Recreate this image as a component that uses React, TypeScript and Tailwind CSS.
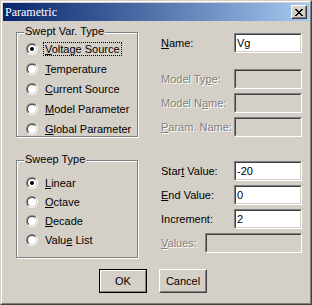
import React from "react";

function Radio({ checked, children, focus, h }: { checked?: boolean; children: React.ReactNode; focus?: boolean; h: string }) {
  return (
    <div className={`flex items-center ${h}`}>
      <div className="w-[12px] h-[12px] shrink-0 rounded-full border border-t-[#808080] border-l-[#808080] border-r-white border-b-white">
        <div className="w-full h-full rounded-full border border-t-[#404040] border-l-[#404040] border-r-[#d4d0c8] border-b-[#d4d0c8] bg-white flex items-center justify-center">
          {checked ? <div className="w-[4px] h-[4px] rounded-full bg-black" /> : null}
        </div>
      </div>
      <span
        className={
          focus
            ? "ml-[5px] px-[1px] leading-[12px] border border-dotted border-black whitespace-nowrap"
            : "ml-[5px] px-[1px] leading-[12px] border border-transparent whitespace-nowrap"
        }
      >
        {children}
      </span>
    </div>
  );
}

function Group({ title, className, children }: { title: string; className: string; children: React.ReactNode }) {
  return (
    <div className={`relative border border-[#808080] shadow-[inset_1px_1px_0_#ffffff,1px_1px_0_#ffffff] ${className}`}>
      <span className="absolute top-[-8px] left-[7px] px-[1px] bg-[#d4d0c8] leading-[13px] whitespace-nowrap">{title}</span>
      {children}
    </div>
  );
}

function Edit({ value, disabled, w }: { value?: string; disabled?: boolean; w: string }) {
  return (
    <div className={`h-[20px] ${w} border border-t-[#808080] border-l-[#808080] border-r-white border-b-white`}>
      <div
        className={
          disabled
            ? "w-full h-full border border-t-[#404040] border-l-[#404040] border-r-[#d4d0c8] border-b-[#d4d0c8] bg-[#d4d0c8]"
            : "w-full h-full border border-t-[#404040] border-l-[#404040] border-r-[#d4d0c8] border-b-[#d4d0c8] bg-white pl-[1px] leading-[16px]"
        }
      >
        {value}
      </div>
    </div>
  );
}

function Field({
  label,
  disabled,
  value,
  className,
  labelW,
  inputW,
}: {
  label: React.ReactNode;
  disabled?: boolean;
  value?: string;
  className: string;
  labelW: string;
  inputW: string;
}) {
  return (
    <div className={`flex items-center ${className}`}>
      <span
        className={
          disabled
            ? `${labelW} shrink-0 text-[#808080] [text-shadow:1px_1px_0_#ffffff] whitespace-nowrap`
            : `${labelW} shrink-0 text-black whitespace-nowrap`
        }
      >
        {label}
      </span>
      <Edit value={value} disabled={disabled} w={inputW} />
    </div>
  );
}

function U({ children }: { children: React.ReactNode }) {
  return <span className="underline underline-offset-[1px]">{children}</span>;
}

export default function App() {
  return (
    <div className="w-[312px] h-[305px] border border-t-[#d4d0c8] border-l-[#d4d0c8] border-r-[#404040] border-b-[#404040] bg-[#d4d0c8] font-['Liberation_Sans',Arial,sans-serif] text-[11px] text-black">
      <div className="w-full h-full border border-t-white border-l-white border-r-[#808080] border-b-[#808080] p-[1px] flex flex-col">
        {/* Title bar */}
        <div className="h-[18px] shrink-0 flex items-center bg-gradient-to-r from-[#0a246a] to-[#a6caf0]">
          <span className="ml-[2px] text-white [font-family:'Liberation_Serif',serif] font-normal text-[12px] leading-[18px]">Parametric</span>
          <div className="ml-auto mr-[2px] w-[16px] h-[14px] border border-t-white border-l-white border-r-[#404040] border-b-[#404040]">
            <div className="w-full h-full border border-t-[#d4d0c8] border-l-[#d4d0c8] border-r-[#808080] border-b-[#808080] bg-[#d4d0c8] flex items-center justify-center">
              <svg width="8" height="7" viewBox="0 0 8 7" shapeRendering="crispEdges">
                <path
                  fill="#000"
                  d="M0 0h2v1H0zM6 0h2v1H6zM1 1h2v1H1zM5 1h2v1H5zM2 2h4v1H2zM3 3h2v1H3zM2 4h4v1H2zM1 5h2v1H1zM5 5h2v1H5zM0 6h2v1H0zM6 6h2v1H6z"
                />
              </svg>
            </div>
          </div>
        </div>

        {/* Body */}
        <div className="flex flex-col">
          <div className="flex">
            {/* Left column */}
            <div className="ml-[13px] pt-[11px] w-[122px] flex flex-col">
              <Group title="Swept Var. Type" className="h-[105px] pt-[6px] pl-[9px]">
                <Radio h="h-[20px]" checked focus>
                  <U>V</U>oltage Source
                </Radio>
                <Radio h="h-[20px]">
                  <U>T</U>emperature
                </Radio>
                <Radio h="h-[20px]">
                  <U>C</U>urrent Source
                </Radio>
                <Radio h="h-[20px]">
                  <U>M</U>odel Parameter
                </Radio>
                <Radio h="h-[20px]">
                  <U>G</U>lobal Parameter
                </Radio>
              </Group>
              <Group title="Sweep Type" className="mt-[23px] h-[98px] pt-[12px] pl-[9px]">
                <Radio h="h-[19px]" checked>
                  <U>L</U>inear
                </Radio>
                <Radio h="h-[19px]">
                  <U>O</U>ctave
                </Radio>
                <Radio h="h-[19px]">
                  <U>D</U>ecade
                </Radio>
                <Radio h="h-[19px]">
                  Valu<U>e</U> List
                </Radio>
              </Group>
            </div>

            {/* Right column */}
            <div className="ml-[23px] pt-[12px] flex flex-col">
              <Field className="" labelW="w-[73px]" inputW="w-[68px]" value="Vg" label={<><U>N</U>ame:</>} />
              <Field className="mt-[16px]" labelW="w-[73px]" inputW="w-[68px]" disabled label={<>Model Ty<U>p</U>e:</>} />
              <Field className="mt-[4px]" labelW="w-[73px]" inputW="w-[68px]" disabled label={<>Model N<U>a</U>me:</>} />
              <Field className="mt-[4px]" labelW="w-[73px]" inputW="w-[68px]" disabled label={<><U>P</U>aram. Name:</>} />
              <Field className="mt-[24px]" labelW="w-[73px]" inputW="w-[68px]" value="-20" label={<>Star<U>t</U> Value:</>} />
              <Field className="mt-[4px]" labelW="w-[73px]" inputW="w-[68px]" value="0" label={<><U>E</U>nd Value:</>} />
              <Field className="mt-[4px]" labelW="w-[73px]" inputW="w-[68px]" value="2" label={<>Increment:</>} />
              <Field className="mt-[4px]" labelW="w-[44px]" inputW="w-[97px]" disabled label={<><U>V</U>alues:</>} />
            </div>
          </div>

          {/* Buttons */}
          <div className="flex mt-[11px] ml-[96px] gap-[12px]">
            <div className="w-[48px] h-[24px] border border-black">
              <div className="w-full h-full border border-t-white border-l-white border-r-[#808080] border-b-[#808080] flex items-center justify-center">
                OK
              </div>
            </div>
            <div className="w-[48px] h-[24px] border border-t-white border-l-white border-r-[#404040] border-b-[#404040]">
              <div className="w-full h-full border border-t-[#d4d0c8] border-l-[#d4d0c8] border-r-[#808080] border-b-[#808080] flex items-center justify-center">
                Cancel
              </div>
            </div>
          </div>
        </div>
      </div>
    </div>
  );
}
